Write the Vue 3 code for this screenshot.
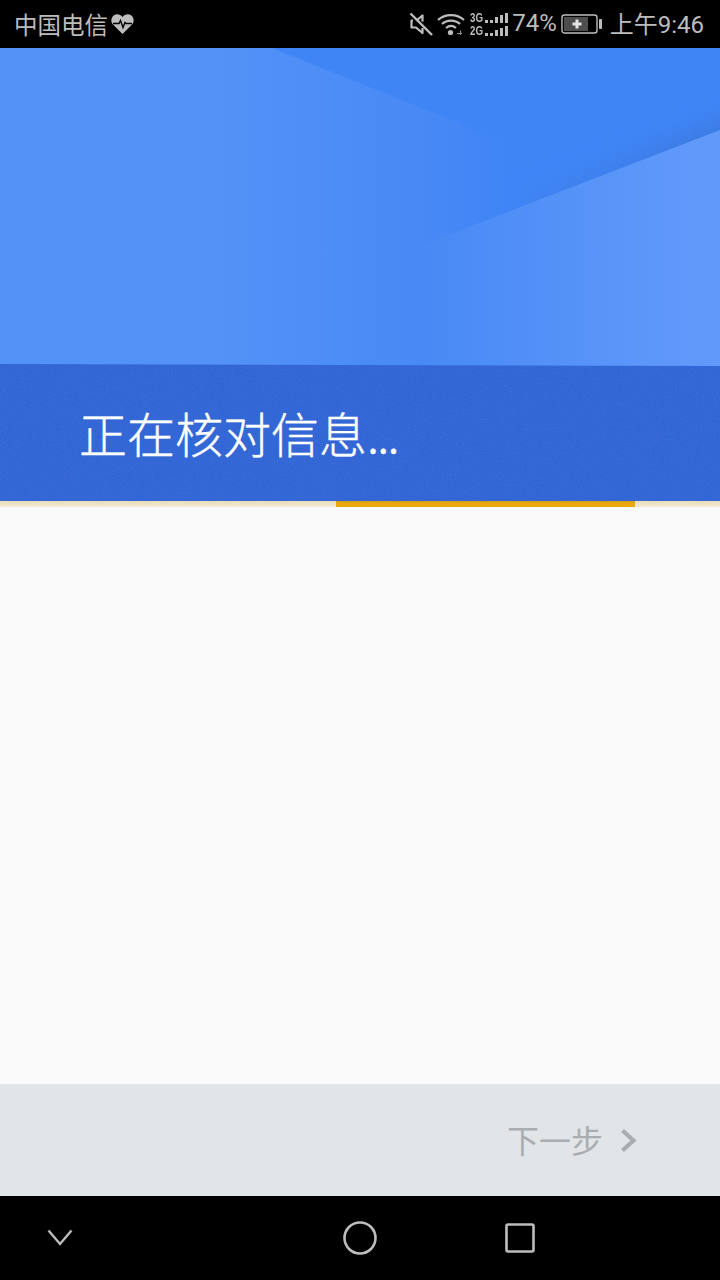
<script setup>
const dots = [
  [3, 3],
  [3, 3],
  [3, 6],
  [3, 8],
  [3, 10],
]
</script>

<template>
  <div class="screen">
    <header class="status">
      <div class="status-left">
        <span class="carrier">中国电信</span>
        <svg class="heart" width="23" height="22" viewBox="0 0 23 22">
          <path d="M11.5 21 2 11.6C-.6 8.8.1 4.6 2.6 2.6c2.9-2.2 6.6-1.4 8.9 1.5 2.3-2.9 6-3.7 8.9-1.5 2.5 2 3.2 6.2.6 9Z" fill="#bdbdbd" />
          <path d="M2 10.5h6l1.5-3 2.5 7 2-5 1 1h6" fill="none" stroke="#000" stroke-width="1.4" />
        </svg>
      </div>
      <div class="status-right">
        <svg class="mute" width="24" height="24" viewBox="0 0 24 24">
          <path d="M4 8.500H2.500v7H7l6.500 5.500v-5M7.500 8.500 13.500 3.500v6" fill="none" stroke="#bdbdbd" stroke-width="2.200" stroke-linejoin="round" />
          <path d="M1.500 1.500 23 23" stroke="#bdbdbd" stroke-width="2.400" />
        </svg>
        <svg class="wifi" width="28" height="24" viewBox="0 0 28 24">
          <g fill="none" stroke="#bdbdbd" stroke-width="2.200">
            <path d="M1 8c7-6.500 19-6.500 26 0" />
            <path d="M5 12c5-4.500 13-4.500 18 0" />
            <path d="M9 16c3-2.500 7-2.500 10 0" />
          </g>
          <circle cx="13.500" cy="20.500" r="2.600" fill="#bdbdbd" />
          <path d="M20 21.500h5M23.500 18.500v4.500" stroke="#8a8a8a" stroke-width="1.200" />
        </svg>
        <div class="signal">
          <div class="signal-row">
            <span class="net">3G</span>
            <span class="bars"><i v-for="(d, i) in dots" :key="i" :style="{ width: d[0] + 'px', height: d[1] + 'px' }"></i></span>
          </div>
          <div class="signal-row">
            <span class="net">2G</span>
            <span class="bars"><i v-for="(d, i) in dots" :key="i" :style="{ width: d[0] + 'px', height: d[1] + 'px' }"></i></span>
          </div>
        </div>
        <span class="percent">74%</span>
        <svg class="battery" width="41" height="22" viewBox="0 0 41 22">
          <rect x="1" y="2" width="35" height="18" rx="2.5" fill="none" stroke="#bdbdbd" stroke-width="1.4" />
          <rect x="3" y="4" width="24" height="14" fill="#4d4d4d" />
          <path d="M16 6.500v9M11.500 11h9" stroke="#e6e6e6" stroke-width="3" />
          <rect x="38" y="6" width="3" height="10" rx="1" fill="#bdbdbd" />
        </svg>
        <span class="clock">上午9:46</span>
      </div>
    </header>

    <section class="hero">
      <svg class="hero-art" width="720" height="318" viewBox="0 0 720 318">
        <defs>
          <linearGradient id="leftFill" gradientUnits="userSpaceOnUse" x1="0" y1="0" x2="720" y2="0">
            <stop offset="0" stop-color="#5492f7" />
            <stop offset="0.3" stop-color="#5492f7" />
            <stop offset="0.58" stop-color="#4889f5" />
            <stop offset="0.7" stop-color="#4085f6" />
          </linearGradient>
          <linearGradient id="rightFill" gradientUnits="userSpaceOnUse" x1="417" y1="0" x2="690" y2="0">
            <stop offset="0" stop-color="#4889f5" />
            <stop offset="1" stop-color="#6099fa" />
          </linearGradient>
          <linearGradient id="shade" gradientUnits="userSpaceOnUse" x1="640" y1="113" x2="628" y2="82">
            <stop offset="0" stop-color="#3a76d8" stop-opacity="0.6" />
            <stop offset="1" stop-color="#3f84f6" stop-opacity="0" />
          </linearGradient>
          <linearGradient id="shadeFadeFill" gradientUnits="userSpaceOnUse" x1="500" y1="0" x2="700" y2="0">
            <stop offset="0" stop-color="#000" />
            <stop offset="1" stop-color="#fff" />
          </linearGradient>
          <mask id="shadeFade" maskUnits="userSpaceOnUse" x="0" y="0" width="720" height="318">
            <rect width="720" height="318" fill="url(#shadeFadeFill)" />
          </mask>
        </defs>
        <rect width="720" height="318" fill="#4085f6" />
        <polygon points="430,194 720,82 720,40 500,120" fill="url(#shade)" mask="url(#shadeFade)" />
        <polygon points="0,0 272,0 504,93 504,318 0,318" fill="url(#leftFill)" />
        <polygon points="720,82 417,199 417,318 720,318" fill="url(#rightFill)" />
        <polygon points="0,316 720,318 0,318" fill="#3367d6" />
      </svg>
    </section>

    <section class="band">
      <svg class="grain" width="720" height="135" aria-hidden="true">
        <filter id="grainNoise">
          <feTurbulence type="fractalNoise" baseFrequency="0.9" numOctaves="2" />
          <feColorMatrix values="0 0 0 0 1  0 0 0 0 1  0 0 0 0 1  0 0 0 1.2 -0.45" />
        </filter>
        <rect width="720" height="135" filter="url(#grainNoise)" opacity="0.1" />
      </svg>
      <h1 class="title">正在核对信息<span class="dots">...</span></h1>
    </section>

    <div class="track"><div class="track-fill"></div></div>

    <main class="body"></main>

    <footer class="footer">
      <span class="next">下一步</span>
      <svg class="next-arrow" width="17" height="25" viewBox="0 0 17 25">
        <path d="M2.5 2.500 13.500 12.500 2.500 22.500" fill="none" stroke="#a9adb1" stroke-width="4.200" />
      </svg>
    </footer>

    <nav class="nav">
      <svg class="nav-back" width="26" height="17" viewBox="0 0 26 17">
        <path d="M1.500 1.500 13 15 24.500 1.500" fill="none" stroke="#bdbdbd" stroke-width="2.400" />
      </svg>
      <svg class="nav-home" width="34" height="34" viewBox="0 0 34 34">
        <circle cx="17" cy="17" r="15.500" fill="none" stroke="#bdbdbd" stroke-width="2.600" />
      </svg>
      <svg class="nav-recent" width="30" height="30" viewBox="0 0 30 30">
        <rect x="1.500" y="1.500" width="27" height="27" rx="1.500" fill="none" stroke="#bdbdbd" stroke-width="2.600" />
      </svg>
    </nav>
  </div>
</template>

<style scoped>
.screen {
  width: 720px;
  height: 1280px;
  display: flex;
  flex-direction: column;
  background: #fafafa;
  font-family: "Noto Sans CJK SC", "Noto Sans", sans-serif;
  overflow: hidden;
}
.status {
  height: 48px;
  flex: none;
  background: #000;
  color: #bdbdbd;
  display: flex;
  align-items: center;
  justify-content: space-between;
  padding: 0 16px 0 14px;
}
.status-left,
.status-right {
  display: flex;
  align-items: center;
}
.carrier {
  font-size: 23.5px;
  line-height: 48px;
  font-weight: 400;
}
.heart {
  margin-left: 3px;
  margin-top: -1px;
}
.mute {
  margin-right: 4px;
  margin-top: -1px;
}
.wifi {
  margin-right: 5px;
  margin-top: -1px;
}
.signal {
  display: flex;
  flex-direction: column;
  gap: 2px;
  width: 38px;
  margin-right: 4px;
  margin-top: -1px;
}
.signal-row {
  display: flex;
  align-items: flex-end;
  justify-content: space-between;
  height: 11px;
}
.net {
  font-family: "Liberation Sans", sans-serif;
  font-size: 13px;
  line-height: 11px;
  font-weight: 700;
  width: 13px;
  white-space: nowrap;
  transform: scaleX(0.75);
  transform-origin: left center;
}
.bars {
  display: flex;
  align-items: flex-end;
  gap: 2px;
  height: 11px;
}
.bars i {
  display: block;
  background: #bdbdbd;
}
.percent {
  font-family: Roboto, sans-serif;
  font-size: 24px;
  line-height: 48px;
  margin-top: -2px;
  margin-right: 4px;
}
.battery {
  margin-right: 8px;
}
.clock {
  font-family: Roboto, "Noto Sans CJK SC", sans-serif;
  font-size: 24px;
  line-height: 48px;
  margin-top: 1px;
}
.hero {
  height: 318px;
  flex: none;
  background: #4085f6;
}
.hero-art {
  display: block;
}
.band {
  position: relative;
  height: 135px;
  flex: none;
  background: #3165d5;
  display: flex;
  align-items: center;
  padding: 0 0 0 79px;
  box-sizing: border-box;
}
.grain {
  position: absolute;
  inset: 0;
}
.title {
  position: relative;
  margin: 0 0 3px;
  color: #fff;
  font-size: 48px;
  line-height: 64px;
  font-weight: 300;
  -webkit-text-stroke: 0.4px #fff;
}
.dots {
  letter-spacing: -1.800px;
}
.track {
  height: 6px;
  flex: none;
  background: linear-gradient(#e9dcb9, #f4ead4);
  padding-left: 336px;
}
.track-fill {
  width: 299px;
  height: 6px;
  background: linear-gradient(#d69e14, #e8a80e 40%);
}
.body {
  flex: 1;
  background: #fafafa;
}
.footer {
  height: 112px;
  flex: none;
  background: #e1e5e8;
  display: flex;
  align-items: center;
  justify-content: flex-end;
  padding-right: 83px;
}
.next {
  color: #a9adb1;
  font-size: 32px;
  line-height: 40px;
  font-weight: 400;
  margin: 0 17px 2px 0;
}
.nav {
  height: 84px;
  flex: none;
  background: #000;
  display: grid;
  grid-template-columns: 120px 160px 160px 160px 120px;
  align-items: center;
  justify-items: center;
}
.nav-back {
  grid-column: 1;
  margin-top: -1px;
}
.nav-home {
  grid-column: 3;
  margin-top: -1px;
}
.nav-recent {
  grid-column: 4;
  margin-top: -1px;
}
</style>
